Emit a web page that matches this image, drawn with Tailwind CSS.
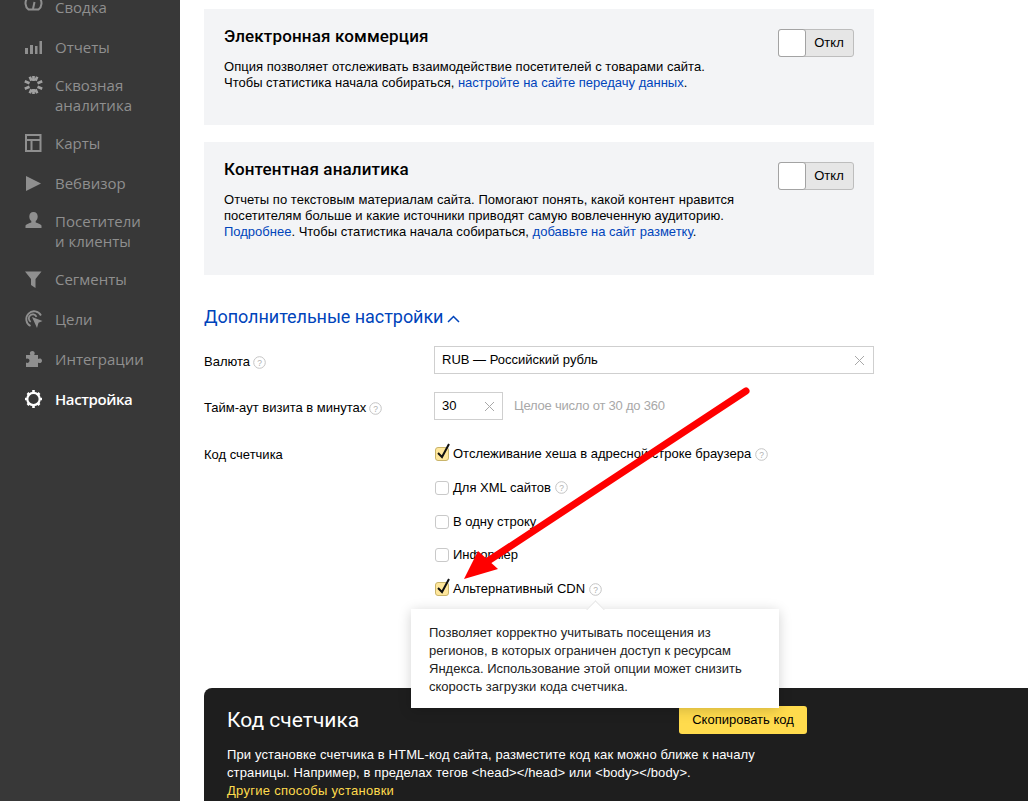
<!DOCTYPE html>
<html lang="ru">
<head>
    <meta charset="UTF-8">
    <meta name="viewport" content="width=device-width, initial-scale=1.0">
    <title>Настройка счетчика</title>
    <script src="https://cdn.jsdelivr.net/npm/@tailwindcss/browser@4"></script>
</head>
<body class="bg-white overflow-hidden">
<div class="relative flex w-[1028px] h-[801px] overflow-hidden font-['Liberation_Sans',sans-serif] text-[13px] text-black">

    <!-- sidebar -->
    <nav class="w-[180px] shrink-0 bg-[#383838] text-[#8f8f8f] font-['Open_Sans',sans-serif] text-[15px] leading-[20px] -mt-[3px]">
        <a class="flex gap-[12px] pl-[24px] h-[40px]">
            <svg class="w-[19px] h-[20px] mt-[-5px] shrink-0" viewBox="0 0 19 20" fill="none" stroke="#8f8f8f" stroke-width="2"><path d="M4.500 17.500a8 8 0 1 1 10 0z"/><path d="M9 17l1.500-7"/></svg>
            <span>Сводка</span>
        </a>
        <a class="flex gap-[12px] pl-[24px] h-[38px]">
            <svg class="w-[19px] h-[20px] shrink-0" viewBox="0 0 19 20" fill="#8f8f8f"><path d="M1 11h3v6H1zM6 8h3v9H6zM11 9h2.500v8H11zM15.500 4H18v13h-2.500z"/></svg>
            <span>Отчеты</span>
        </a>
        <a class="flex gap-[12px] pl-[24px] h-[58px]">
            <svg class="w-[19px] h-[20px] shrink-0" viewBox="0 0 19 20" fill="none" stroke="#a0a0a0" stroke-width="2.700"><path d="M9.500 1v5M9.500 14v5M5.800 1.800l1.700 4M13.200 1.800l-1.700 4M5.800 18.200l1.700-4M13.200 18.200l-1.700-4M.8 6.300l4.700 2M18.200 6.300l-4.700 2M.8 13.700l4.700-2M18.200 13.700l-4.700-2"/></svg>
            <span>Сквозная<br>аналитика</span>
        </a>
        <a class="flex gap-[12px] pl-[24px] h-[40px]">
            <svg class="w-[19px] h-[20px] shrink-0" viewBox="0 0 19 20" fill="none" stroke="#8f8f8f" stroke-width="2"><path d="M2 2h14.500v16H2zM2 7h14.500M7.500 7v11"/></svg>
            <span>Карты</span>
        </a>
        <a class="flex gap-[12px] pl-[24px] h-[38px]">
            <svg class="w-[19px] h-[20px] shrink-0" viewBox="0 0 19 20" fill="#8f8f8f"><path d="M2 3l15 7.500L2 18z"/></svg>
            <span>Вебвизор</span>
        </a>
        <a class="flex gap-[12px] pl-[24px] h-[58px]">
            <svg class="w-[19px] h-[20px] shrink-0" viewBox="0 0 19 20" fill="#8f8f8f"><path d="M9.500 1c2.700 0 4.200 2 4.200 4.500 0 2-.8 3.500-2 4.600v1.400c2 .8 4.800 1.300 5.800 3V17H1.500v-2.500c1-1.700 3.800-2.200 5.800-3v-1.400c-1.200-1.100-2-2.600-2-4.600C5.300 3 6.800 1 9.500 1z"/></svg>
            <span>Посетители<br>и клиенты</span>
        </a>
        <a class="flex gap-[12px] pl-[24px] h-[40px]">
            <svg class="w-[19px] h-[20px] shrink-0" viewBox="0 0 19 20" fill="#8f8f8f"><path d="M1 2.500h16.500l-6 7.500v9l-4.500-3v-6z"/></svg>
            <span>Сегменты</span>
        </a>
        <a class="flex gap-[12px] pl-[24px] h-[40px]">
            <svg class="w-[19px] h-[20px] shrink-0" viewBox="0 0 19 20" fill="none" stroke="#8f8f8f" stroke-width="1.800"><path d="M6.500 17A7.800 7.800 0 1 1 17 6.500"/><path d="M6.800 12.800a4 4 0 1 1 5.700-5"/><path fill="#8f8f8f" stroke="none" d="M8 8L18.500 12l-4 1.800L13 19z"/></svg>
            <span>Цели</span>
        </a>
        <a class="flex gap-[12px] pl-[24px] h-[40px]">
            <svg class="w-[19px] h-[20px] shrink-0" viewBox="0 0 19 20" fill="#8f8f8f"><path d="M2 6h4.500c-1-1-1-4 1.800-4s2.800 3 1.800 4H14v4c1-.8 4-.8 4 1.800s-3 2.700-4 1.700V18H2v-4.500c1.500 1 3.500 0 3.500-1.700S3.500 9 2 10z"/></svg>
            <span>Интеграции</span>
        </a>
        <a class="flex gap-[12px] pl-[24px] h-[40px] text-white font-semibold tracking-[-0.4px]">
            <svg class="w-[19px] h-[20px] shrink-0" viewBox="0 0 19 20" fill="none" stroke="#fff"><circle cx="9.500" cy="10" r="6.200" stroke-width="2.200"/><path stroke-width="2.600" d="M9.500 1v3M9.500 16v3M1 10h3M15 10h3M3.500 4l2 2M13.500 14l2 2M15.500 4l-2 2M5.500 14l-2 2"/></svg>
            <span>Настройка</span>
        </a>
    </nav>

    <!-- main column -->
    <main class="w-[848px] shrink-0 pl-[24px] pt-[9px]">
        <section class="w-[670px] h-[116px] bg-[#f3f4f6] pl-[20px] pr-[20px] pt-[17px] flex justify-between">
            <div>
                <h2 class="text-[17px] leading-[20px] font-['Roboto',sans-serif] font-medium tracking-[0.15px] mb-[13px]">Электронная коммерция</h2>
                <p class="leading-[16px]"><span class="tracking-[0.04px]">Опция позволяет отслеживать взаимодействие посетителей с товарами сайта.</span><br>Чтобы статистика начала собираться, <a class="text-[#04b]">настройте на сайте передачу данных</a>.</p>
            </div>
            <div class="flex w-[76px] h-[28px] mt-[3px] bg-[#e6e6e6] border border-[#bdbdbd] rounded-[3px]">
                <span class="w-[28px] h-[28px] -m-px bg-white border border-[#a3a3a3] rounded-[3px]"></span>
                <span class="flex-1 text-center leading-[26px]">Откл</span>
            </div>
        </section>

        <section class="w-[670px] h-[133px] mt-[17px] bg-[#f3f4f6] pl-[20px] pr-[20px] pt-[17px] flex justify-between">
            <div>
                <h2 class="text-[17px] leading-[20px] font-['Roboto',sans-serif] font-medium tracking-[0.15px] mb-[13px]">Контентная аналитика</h2>
                <p class="leading-[16px]"><span class="tracking-[0.04px]">Отчеты по текстовым материалам сайта. Помогают понять, какой контент нравится<br>посетителям больше и какие источники приводят самую вовлеченную аудиторию.</span><br><a class="text-[#04b]">Подробнее</a>. Чтобы статистика начала собираться, <a class="text-[#04b]">добавьте на сайт разметку</a>.</p>
            </div>
            <div class="flex w-[76px] h-[28px] mt-[3px] bg-[#e6e6e6] border border-[#bdbdbd] rounded-[3px]">
                <span class="w-[28px] h-[28px] -m-px bg-white border border-[#a3a3a3] rounded-[3px]"></span>
                <span class="flex-1 text-center leading-[26px]">Откл</span>
            </div>
        </section>

        <h3 class="mt-[30px] text-[18px] leading-[24px] text-[#04b] font-['Roboto',sans-serif] tracking-[-0.05px] flex items-center gap-[4px]">
            Дополнительные настройки
            <svg class="w-[13px] h-[8px] mt-[3px]" viewBox="0 0 13 8" fill="none" stroke="#04b" stroke-width="1.500"><path d="M1 7l5.500-5.500L12 7"/></svg>
        </h3>

        <div class="flex w-[670px] mt-[17px] h-[28px]">
            <div class="w-[230px] flex items-center gap-[3px] pt-[4px]">Валюта <svg class="w-[13px] h-[13px]" viewBox="0 0 13 13"><circle cx="6.500" cy="6.500" r="5.800" fill="none" stroke="#c4c4c4"/><text x="6.500" y="9.500" text-anchor="middle" font-size="8.500" fill="#b0b0b0">?</text></svg></div>
            <div class="flex-1 border border-[#cfcfcf] flex items-center justify-between pl-[7px] pr-[8px]">
                <span>RUB — Российский рубль</span>
                <svg class="w-[11px] h-[11px]" viewBox="0 0 11 11" stroke="#a8a8a8" fill="none"><path d="M1 1l9 9M10 1l-9 9"/></svg>
            </div>
        </div>

        <div class="flex w-[670px] mt-[18px] h-[28px]">
            <div class="w-[230px] flex items-center gap-[3px] pt-[4px]">Тайм-аут визита в минутах <svg class="w-[13px] h-[13px]" viewBox="0 0 13 13"><circle cx="6.500" cy="6.500" r="5.800" fill="none" stroke="#c4c4c4"/><text x="6.500" y="9.500" text-anchor="middle" font-size="8.500" fill="#b0b0b0">?</text></svg></div>
            <div class="w-[69px] border border-[#cfcfcf] flex items-center justify-between pl-[7px] pr-[7px]">
                <span>30</span>
                <svg class="w-[11px] h-[11px]" viewBox="0 0 11 11" stroke="#a8a8a8" fill="none"><path d="M1 1l9 9M10 1l-9 9"/></svg>
            </div>
            <div class="ml-[11px] flex items-center text-[#a8a8a8] tracking-[-0.22px]">Целое число от 30 до 360</div>
        </div>

        <div class="flex w-[670px] mt-[26px]">
            <div class="w-[230px] pt-[1px] leading-[16px]">Код счетчика</div>
            <ul class="flex flex-col gap-[17.750px] leading-[16px]">
                <li class="flex items-center gap-[5px] h-[16px]">
                    <span class="relative w-[14px] h-[14px] ml-px bg-[#ffe79c] border border-[#c9b46a] rounded-[3px]"><svg class="absolute -top-[5px] left-0 w-[16px] h-[18px]" viewBox="0 0 16 18" fill="none" stroke="#111" stroke-width="2"><path d="M2 10l4 4 7-13"/></svg></span>
                    <span class="flex items-center gap-[4px] -ml-px">Отслеживание хеша в адресной строке браузера <svg class="w-[13px] h-[13px]" viewBox="0 0 13 13"><circle cx="6.500" cy="6.500" r="5.800" fill="none" stroke="#c4c4c4"/><text x="6.500" y="9.500" text-anchor="middle" font-size="8.500" fill="#b0b0b0">?</text></svg></span>
                </li>
                <li class="flex items-center gap-[5px] h-[16px]">
                    <span class="w-[14px] h-[14px] ml-px bg-white border border-[#c9c9c9] rounded-[3px]"></span>
                    <span class="flex items-center gap-[4px] -ml-px">Для XML сайтов <svg class="w-[13px] h-[13px]" viewBox="0 0 13 13"><circle cx="6.500" cy="6.500" r="5.800" fill="none" stroke="#c4c4c4"/><text x="6.500" y="9.500" text-anchor="middle" font-size="8.500" fill="#b0b0b0">?</text></svg></span>
                </li>
                <li class="flex items-center gap-[5px] h-[16px]">
                    <span class="w-[14px] h-[14px] ml-px bg-white border border-[#c9c9c9] rounded-[3px]"></span>
                    <span class="-ml-px">В одну строку</span>
                </li>
                <li class="flex items-center gap-[5px] h-[16px]">
                    <span class="w-[14px] h-[14px] ml-px bg-white border border-[#c9c9c9] rounded-[3px]"></span>
                    <span class="-ml-px">Информер</span>
                </li>
                <li class="flex items-center gap-[5px] h-[16px]">
                    <span class="relative w-[14px] h-[14px] ml-px bg-[#ffe79c] border border-[#c9b46a] rounded-[3px]"><svg class="absolute -top-[5px] left-0 w-[16px] h-[18px]" viewBox="0 0 16 18" fill="none" stroke="#111" stroke-width="2"><path d="M2 10l4 4 7-13"/></svg></span>
                    <span class="flex items-center gap-[4px] -ml-px">Альтернативный CDN <svg class="w-[13px] h-[13px]" viewBox="0 0 13 13"><circle cx="6.500" cy="6.500" r="5.800" fill="none" stroke="#c4c4c4"/><text x="6.500" y="9.500" text-anchor="middle" font-size="8.500" fill="#b0b0b0">?</text></svg></span>
                </li>
            </ul>
        </div>

        <section class="w-[824px] h-[130px] mt-[91px] bg-[#1e1e1e] rounded-tl-[8px] text-white pl-[23px] pt-[18px]">
            <div class="flex justify-between w-[580px] items-center">
                <h2 class="text-[21px] leading-[26px] font-['Roboto',sans-serif] font-normal">Код счетчика</h2>
                <button class="w-[128px] h-[28px] bg-[#ffdb4d] text-black rounded-[3px]">Скопировать код</button>
            </div>
            <p class="mt-[12px] leading-[18px] tracking-[0.12px]">При установке счетчика в HTML-код сайта, разместите код как можно ближе к началу<br>страницы. Например, в пределах тегов &lt;head&gt;&lt;/head&gt; или &lt;body&gt;&lt;/body&gt;.<br><a class="text-[#ffdb4d] tracking-[0.28px]">Другие способы установки</a></p>
        </section>
    </main>

    <!-- tooltip over the page -->
    <div class="absolute left-[411px] top-[609px] w-[368px] h-[99px] bg-white shadow-[0_2px_12px_rgba(0,0,0,0.18)] pl-[18px] pt-[15px] leading-[18px] text-[13px] text-[#222]">
        <span class="absolute left-[178px] -top-[6px] w-[13px] h-[13px] rotate-45 bg-white border-l border-t border-[#e8e8e8]"></span>
        <p class="relative">Позволяет корректно учитывать посещения из<br>регионов, в которых ограничен доступ к ресурсам<br>Яндекса. Использование этой опции может снизить<br>скорость загрузки кода счетчика.</p>
    </div>

    <!-- red annotation arrow -->
    <svg class="absolute left-0 top-0 w-[1028px] h-[801px] pointer-events-none" viewBox="0 0 1028 801" fill="none">
        <path d="M746 391L488 561" stroke="#ff0000" stroke-width="7" stroke-linecap="round"/>
        <path d="M464 579L478 551L498 569z" fill="#ff0000"/>
    </svg>
</div>
</body>
</html>
